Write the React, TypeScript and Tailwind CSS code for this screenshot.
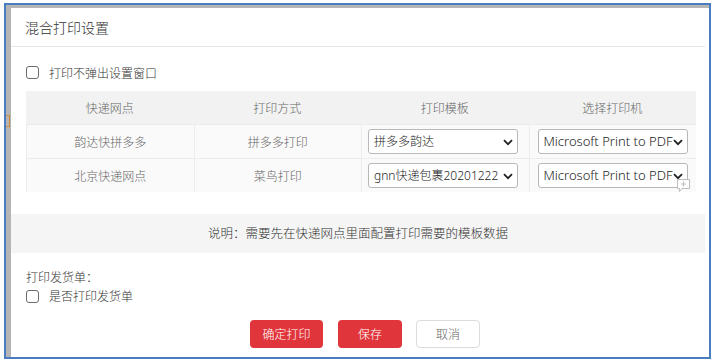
import React from "react";

const font = { fontFamily: '"Noto Sans CJK SC", "Noto Sans", sans-serif' };
const selectFont = { fontFamily: '"Noto Sans", "Noto Sans CJK SC", sans-serif' };

const Checkbox = () => (
  <span className="inline-block w-[13px] h-[13px] rounded-[3px] border border-[#6b6b6b] bg-white" />
);

const Chevron = () => (
  <svg width="10" height="7" viewBox="0 0 10 7" className="shrink-0">
    <path d="M1 1.2 L5 5.2 L9 1.2" fill="none" stroke="#222" strokeWidth="1.8" />
  </svg>
);

const FakeSelect: React.FC<{ value: string; small?: boolean }> = ({ value, small }) => (
  <div
    className="relative w-[150px] h-[25px] rounded-[3px] border border-[#b8b8b8] bg-white flex items-center pl-[5px] pr-[16px] overflow-hidden"
    style={selectFont}
  >
    <span className={`whitespace-nowrap ${small ? "text-[12px]" : "text-[13px]"} text-[#222] leading-none`}>
      {value}
    </span>
    <span className="absolute right-[4px] top-[9px] bg-white pl-[1px]">
      <Chevron />
    </span>
  </div>
);

const rows = [
  { site: "韵达快拼多多", mode: "拼多多打印", tpl: "拼多多韵达" },
  { site: "北京快递网点", mode: "菜鸟打印", tpl: "gnn快递包裹20201222" },
];

export default function App() {
  return (
    <div className="w-[715px] h-[363px] bg-white pt-[3px] pl-[4px] font-light" style={font}>
      <div className="w-[707px] h-[356px] border-2 border-[#4a7cc1] flex flex-col">
        <div className="flex-1 flex flex-col border-t-[3px] border-l-[5px] border-[#b5b5b5] bg-white pr-[4px] pb-[2px] relative">
          <span className="absolute left-[-5px] top-[107px] w-[4px] h-[12px] border border-[#d08a3a] border-l-0" />
          <div className="flex-1 bg-white rounded-tl-[5px] flex flex-col">
            <div className="h-[39px] border-b border-[#e8e8e8] flex items-center pl-[14px] text-[14px] text-[#333]">
              混合打印设置
            </div>
            <div className="pl-[15px] pr-[9px]">
              <div className="h-[44px] flex items-center gap-[10px] pt-[7px] text-[12px] text-[#333]">
                <Checkbox />
                <span>打印不弹出设置窗口</span>
              </div>
              <div className="grid grid-cols-4 text-[12px] text-[#666]">
                {["快递网点", "打印方式", "打印模板", "选择打印机"].map((h) => (
                  <div key={h} className="h-[33px] bg-[#f2f2f2] flex items-center justify-center">
                    {h}
                  </div>
                ))}
                {rows.map((r) => (
                  <React.Fragment key={r.site}>
                    <div className="h-[34px] bg-[#fafafa] border-t border-[#ececec] border-l flex items-center justify-center">
                      {r.site}
                    </div>
                    <div className="h-[34px] bg-[#fafafa] border-t border-l border-[#ececec] flex items-center justify-center">
                      {r.mode}
                    </div>
                    <div className="h-[34px] bg-[#fafafa] border-t border-l border-[#ececec] flex items-center pl-[6px]">
                      <FakeSelect value={r.tpl} small />
                    </div>
                    <div className="h-[34px] bg-[#fafafa] border-t border-l border-[#ececec] flex items-center pl-[8px] relative">
                      <FakeSelect value="Microsoft Print to PDF" />
                    </div>
                  </React.Fragment>
                ))}
              </div>
            </div>
            <div className="relative">
              <svg width="15" height="15" viewBox="0 0 15 15" className="absolute left-[665px] top-[-14px]">
                <path d="M1.5 1.5 H13.5 V10.5 H6 L3.5 13.5 V10.5 H1.5 Z" fill="white" stroke="#bdbdbd" strokeWidth="1" />
                <path d="M7.5 3.5 V8.5 M5 6 H10" stroke="#bdbdbd" strokeWidth="1" />
              </svg>
            </div>
            <div className="mt-[22px] h-[39px] bg-[#f5f5f5] flex items-center justify-center text-[12.5px] text-[#333]">
              说明：需要先在快递网点里面配置打印需要的模板数据
            </div>
            <div className="pl-[15px] pt-[15px] text-[12px] text-[#333]">
              <div className="h-[18px] flex items-center">打印发货单：</div>
              <div className="h-[20px] flex items-center gap-[10px]">
                <Checkbox />
                <span>是否打印发货单</span>
              </div>
            </div>
            <div className="flex gap-[15px] pl-[239px] mt-[14px] text-[12px]">
              <button className="w-[73px] h-[28px] rounded-[4px] bg-[#e0353b] text-white">确定打印</button>
              <button className="w-[64px] h-[28px] rounded-[4px] bg-[#e0353b] text-white">保存</button>
              <button className="w-[64px] h-[28px] rounded-[4px] border border-[#dcdcdc] bg-white text-[#666] -ml-[1px]">
                取消
              </button>
            </div>
          </div>
        </div>
      </div>
    </div>
  );
}
